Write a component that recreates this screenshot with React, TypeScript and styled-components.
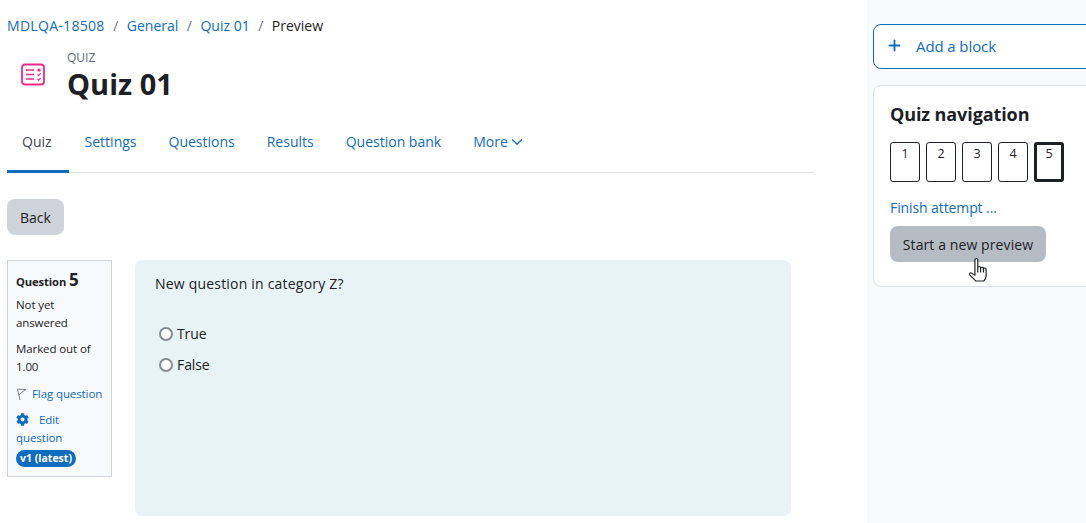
import React from "react";
import styled, { createGlobalStyle } from "styled-components";
import { FaCog } from "react-icons/fa";
import { ChevronDown, Plus } from "lucide-react";

const GlobalStyle = createGlobalStyle`
  html, body {
    margin: 0;
    padding: 0;
    height: 523px;
    overflow: hidden;
    background: #fff;
    font-family: "Open Sans", "Noto Sans", sans-serif;
    color: #1d2125;
  }
`;

const Layout = styled.div`
  display: flex;
  width: 1086px;
  height: 523px;
  overflow: hidden;
`;

const Main = styled.main`
  width: 807px;
  flex: none;
  margin-left: 7px;
  margin-right: 53px;
`;

const Breadcrumb = styled.nav`
  display: flex;
  align-items: center;
  height: 20px;
  margin-top: 15px;
  font-size: 14px;
`;

const Crumb = styled.a<{ $caps?: boolean }>`
  color: #0f6cbf;
  letter-spacing: ${(p) => (p.$caps ? "0.3px" : "0")};
`;

const CrumbSeparator = styled.span`
  color: #6a737b;
  margin: 0 8.5px;
`;

const Heading = styled.header`
  display: flex;
  align-items: flex-start;
  height: 76px;
  padding-top: 16px;
  box-sizing: border-box;
`;

const ActivityIcon = styled.svg`
  width: 26px;
  height: 24px;
  margin: 12px 21px 0 13px;
  flex: none;
`;

const HeadingText = styled.div`
  display: flex;
  flex-direction: column;
`;

const Eyebrow = styled.span`
  font-size: 12px;
  line-height: 14px;
  color: #5f6973;
`;

const Title = styled.h1`
  margin: 2px 0 0;
  font-size: 29px;
  line-height: 34px;
  font-weight: 700;
`;

const Tabs = styled.div`
  display: flex;
  height: 62px;
  box-sizing: border-box;
  border-bottom: 1px solid #dee2e6;
`;

const Tab = styled.a<{ $active?: boolean }>`
  display: flex;
  align-items: center;
  height: 62px;
  box-sizing: border-box;
  padding: 2px ${(p) => (p.$active ? "17px 0 15px" : "16px 0 16px")};
  font-size: 14px;
  color: ${(p) => (p.$active ? "#3f4750" : "#0f6cbf")};
  border-bottom: 3px solid ${(p) => (p.$active ? "#0f6cbf" : "transparent")};
`;

const BackButton = styled.button`
  display: block;
  width: 57px;
  height: 36px;
  margin-top: 26px;
  border: 0;
  border-radius: 8px;
  background: #ced4da;
  color: #1d2125;
  font: 14px "Open Sans", sans-serif;
`;

const QuestionRow = styled.section`
  display: flex;
  align-items: flex-start;
  gap: 23px;
  margin-top: 25px;
`;

const InfoBox = styled.aside`
  width: 105px;
  height: 217px;
  box-sizing: border-box;
  padding: 8px 8px 0;
  background: #f8f9fa;
  border: 1px solid #ced4da;
  font-size: 11.5px;
  line-height: 18px;
  letter-spacing: -0.1px;
`;

const QuestionNumber = styled.div`
  font-weight: 700;
  font-size: 11.2px;
  line-height: 22px;
`;

const BigNumber = styled.span`
  font-size: 17px;
`;

const InfoText = styled.div<{ $gap: number }>`
  margin-top: ${(p) => p.$gap}px;
`;

const FlagLine = styled.a`
  display: flex;
  align-items: center;
  gap: 5px;
  margin-top: 9px;
  color: #0f6cbf;
  white-space: nowrap;
`;

const EditLine = styled.a`
  display: block;
  margin-top: 8px;
  color: #0f6cbf;
`;

const Gear = styled(FaCog)`
  width: 13px;
  height: 13px;
  margin-right: 10px;
  vertical-align: -2px;
`;

const VersionBadge = styled.span`
  display: block;
  width: 60px;
  height: 17px;
  margin-top: 3px;
  border-radius: 9px;
  background: #0f6cbf;
  color: #fff;
  font-weight: 700;
  font-size: 10.5px;
  line-height: 17px;
  letter-spacing: 0;
  text-align: center;
`;

const QuestionCard = styled.div`
  width: 656px;
  height: 256px;
  box-sizing: border-box;
  padding: 14px 20px;
  background: #e7f3f5;
  border-radius: 8px;
  font-size: 14px;
`;

const Prompt = styled.div`
  line-height: 20px;
  margin-bottom: 24px;
  letter-spacing: 0.2px;
`;

const Choice = styled.label`
  display: flex;
  align-items: center;
  gap: 4px;
  height: 31px;
  padding-left: 4px;
  letter-spacing: -0.1px;
`;

const Radio = styled.span`
  width: 14px;
  height: 14px;
  box-sizing: border-box;
  border: 2px solid #858c94;
  border-radius: 50%;
  background: #fff;
`;

const Sidebar = styled.aside`
  flex: none;
  width: 219px;
  padding: 24px 0 0 6px;
  background: #f8f9fa;
`;

const AddBlock = styled.a`
  display: flex;
  align-items: center;
  gap: 13px;
  width: 240px;
  height: 45px;
  box-sizing: border-box;
  padding: 0 0 2px 12px;
  background: #fff;
  border: 1px solid #0f6cbf;
  border-radius: 8px;
  color: #0f6cbf;
  font-size: 15px;
  letter-spacing: -0.1px;
`;

const NavCard = styled.div`
  position: relative;
  width: 240px;
  height: 202px;
  box-sizing: border-box;
  margin-top: 16px;
  padding: 15px 16px;
  background: #fff;
  border: 1px solid #dee2e6;
  border-radius: 8px;
`;

const NavTitle = styled.h5`
  margin: 0;
  font-size: 18px;
  line-height: 26px;
  font-weight: 700;
  letter-spacing: -0.1px;
`;

const NavButtons = styled.div`
  display: flex;
  gap: 6px;
  margin-top: 15px;
`;

const NavButton = styled.a<{ $current?: boolean }>`
  width: 30px;
  height: 40px;
  box-sizing: border-box;
  border: ${(p) => (p.$current ? "3px solid #1d2125" : "1px solid #1d2125")};
  border-radius: 3px;
  padding-top: ${(p) => (p.$current ? "0" : "2px")};
  font-size: 12.5px;
  line-height: 18px;
  text-align: center;
  color: #1d2125;
`;

const FinishLink = styled.a`
  display: block;
  margin-top: 16px;
  color: #0f6cbf;
  font-size: 14px;
  line-height: 20px;
  letter-spacing: -0.1px;
`;

const PreviewButton = styled.button`
  display: block;
  width: 156px;
  height: 36px;
  margin-top: 8px;
  padding: 0;
  border: 0;
  border-radius: 8px;
  background: #b5bcc4;
  color: #1d2125;
  font: 14px "Open Sans", sans-serif;
  letter-spacing: 0.1px;
`;

const HandCursor = styled.svg`
  position: absolute;
  left: 95px;
  top: 172px;
  width: 18px;
  height: 25px;
`;

const Flag = styled.svg`
  width: 11px;
  height: 13px;
  flex: none;
`;

const tabs = ["Settings", "Questions", "Results", "Question bank"];
const pages = [1, 2, 3, 4, 5];

const App = () => (
  <Layout>
    <GlobalStyle />
    <Main>
      <Breadcrumb>
        <Crumb $caps>MDLQA-18508</Crumb>
        <CrumbSeparator>/</CrumbSeparator>
        <Crumb>General</Crumb>
        <CrumbSeparator>/</CrumbSeparator>
        <Crumb>Quiz 01</Crumb>
        <CrumbSeparator>/</CrumbSeparator>
        <span>Preview</span>
      </Breadcrumb>
      <Heading>
        <ActivityIcon viewBox="0 0 26 24" fill="none" stroke="#f0288c">
          <rect x="2" y="1.5" width="22" height="20" rx="3" strokeWidth="1.8" />
          <path d="M6 7h8M6 11.5h8M6 16h8" strokeWidth="1.4" />
          <path d="M17.5 6.5h3M17.5 7.8h3" strokeWidth="1.3" />
          <path d="M17.5 11.5l1.2 1.2 2-2.4M17.5 16l1.2 1.2 2-2.4" strokeWidth="1.2" />
        </ActivityIcon>
        <HeadingText>
          <Eyebrow>QUIZ</Eyebrow>
          <Title>Quiz 01</Title>
        </HeadingText>
      </Heading>
      <Tabs>
        <Tab $active>Quiz</Tab>
        {tabs.map((t) => (
          <Tab key={t}>{t}</Tab>
        ))}
        <Tab>
          More
          <ChevronDown size={18} strokeWidth={1.6} />
        </Tab>
      </Tabs>
      <BackButton>Back</BackButton>
      <QuestionRow>
        <InfoBox>
          <QuestionNumber>
            Question <BigNumber>5</BigNumber>
          </QuestionNumber>
          <InfoText $gap={3}>Not yet answered</InfoText>
          <InfoText $gap={8}>Marked out of 1.00</InfoText>
          <FlagLine>
            <Flag viewBox="0 0 11 13" fill="none" stroke="#7b838b" strokeWidth="1">
              <path d="M1.5 1l2.5 11M1.5 1.2L10 1.5 5.5 4.5 3 7" />
            </Flag>
            Flag question
          </FlagLine>
          <EditLine>
            <Gear />
            Edit question
          </EditLine>
          <VersionBadge>v1 (latest)</VersionBadge>
        </InfoBox>
        <QuestionCard>
          <Prompt>New question in category Z?</Prompt>
          <Choice>
            <Radio />
            True
          </Choice>
          <Choice>
            <Radio />
            False
          </Choice>
        </QuestionCard>
      </QuestionRow>
    </Main>
    <Sidebar>
      <AddBlock>
        <Plus size={17} strokeWidth={2.6} />
        Add a block
      </AddBlock>
      <NavCard>
        <NavTitle>Quiz navigation</NavTitle>
        <NavButtons>
          {pages.map((n) => (
            <NavButton key={n} $current={n === 5}>
              {n}
            </NavButton>
          ))}
        </NavButtons>
        <FinishLink>Finish attempt ...</FinishLink>
        <PreviewButton>Start a new preview</PreviewButton>
        <HandCursor viewBox="1 0.5 15.2 26" preserveAspectRatio="none" fill="#fff" stroke="#1d2125" strokeWidth="1" strokeLinejoin="round">
          <path d="M6 2.2c0-1.6 2.4-1.6 2.4 0v8.3c.2-1.5 2.2-1.5 2.4 0v.5c.2-1.3 2.2-1.3 2.4 0v.7c.2-1.1 2.2-1 2.2.2v7.5c0 2.4-1 3.6-2 5.1H6.6c-1-1.8-3.2-4-5-6.6-.8-1.3.7-2.6 2-1.5L6 18.5z" />
          <path d="M8.4 11v4.5M10.8 11v4.5M13.2 11.7v4" fill="none" />
        </HandCursor>
      </NavCard>
    </Sidebar>
  </Layout>
);

export default App;
